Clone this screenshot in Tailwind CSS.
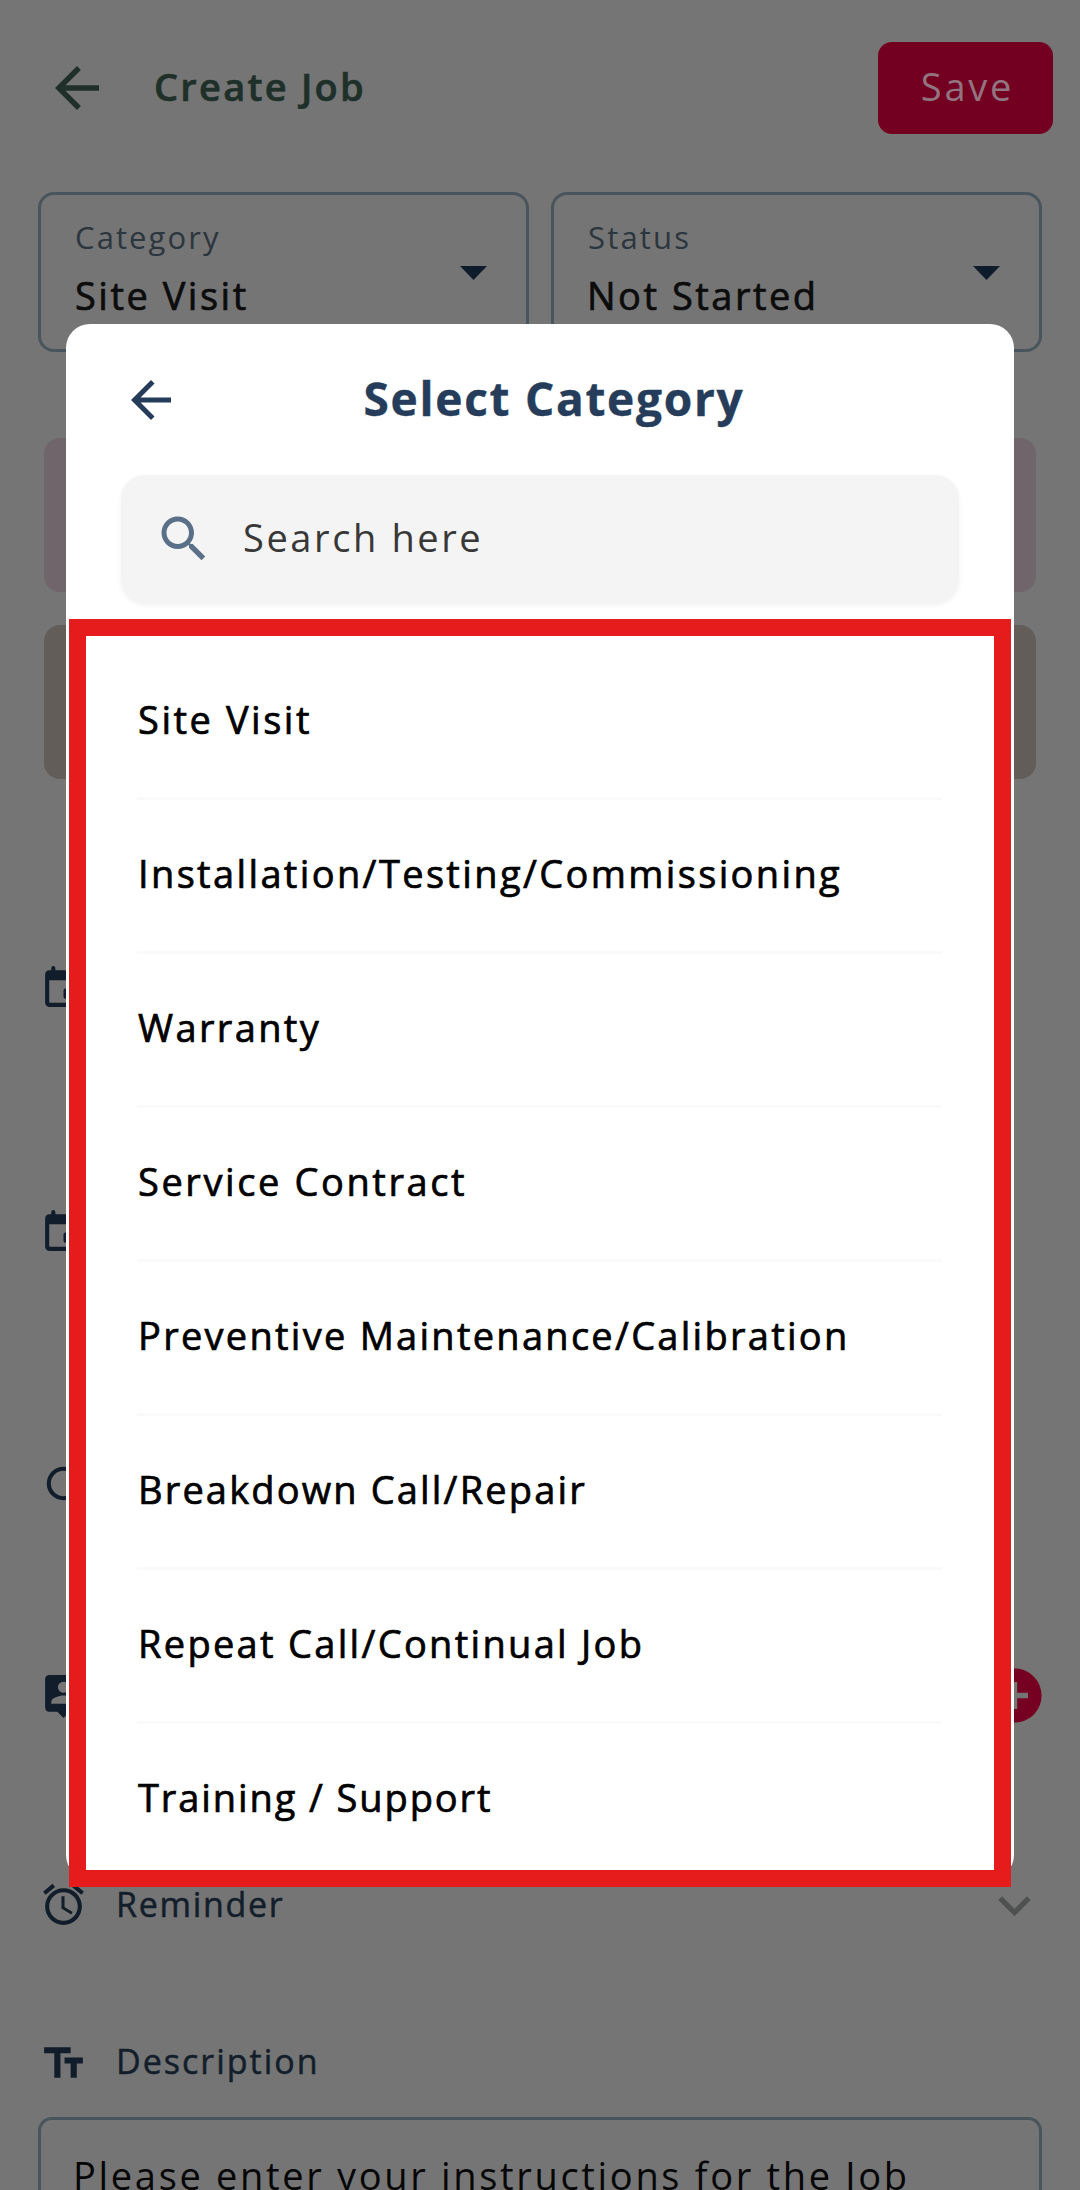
<!DOCTYPE html>
<html lang="en">
<head>
<meta charset="utf-8">
<title>Create Job</title>
<script src="https://cdn.jsdelivr.net/npm/@tailwindcss/browser@4"></script>
</head>
<body class="bg-[#757575]">
<div class="relative w-[1080px] h-[2190px] overflow-hidden bg-[#757575] font-['Open_Sans',sans-serif] text-[38px] leading-[52px] whitespace-nowrap">

  <!-- Job form behind the dialog -->
  <main class="flex flex-col">
    <header class="flex items-center h-[176px] pl-[44px] pr-[27px]">
      <svg class="size-[66px] shrink-0" viewBox="0 0 24 24" fill="#1e3029"><path d="M20 11H7.83l5.59-5.59L12 4l-8 8 8 8 1.41-1.41L7.83 13H20v-2z"/></svg>
      <h1 class="ml-[44px] pb-[5px] font-semibold tracking-[2.25px] [-webkit-text-stroke:0.6px] text-[#1e3029]">Create Job</h1>
      <button class="ml-auto flex items-center justify-center w-[175px] h-[92px] pb-[5px] pl-[4px] rounded-[14px] bg-[#730020] text-[#917480] tracking-[2.8px]">Save</button>
    </header>

    <section class="flex gap-[22px] mt-[16px] px-[38px]">
      <div class="flex items-center justify-between w-[491px] h-[160px] border-3 border-[#49555c] rounded-[16px] pl-[34px] pr-[39px]">
        <div class="flex flex-col pb-[7px]">
          <span class="text-[31px] leading-[42px] tracking-[2.1px] text-[#2c363e]">Category</span>
          <span class="mt-[11px] font-medium tracking-[2.5px] [-webkit-text-stroke:0.7px] text-[#0c0c0c]">Site Visit</span>
        </div>
        <svg class="w-[27px] h-[14px] mt-[2px]" viewBox="0 0 10 5" preserveAspectRatio="none" fill="#0f1c2b"><path d="M0 0l5 5 5-5z"/></svg>
      </div>
      <div class="flex items-center justify-between w-[491px] h-[160px] border-3 border-[#49555c] rounded-[16px] pl-[34px] pr-[39px]">
        <div class="flex flex-col pb-[7px]">
          <span class="text-[31px] leading-[42px] tracking-[2.2px] text-[#2c363e]">Status</span>
          <span class="mt-[11px] -ml-[1px] font-medium tracking-[2.5px] [-webkit-text-stroke:0.7px] text-[#0c0c0c]">Not Started</span>
        </div>
        <svg class="w-[27px] h-[14px] mt-[2px]" viewBox="0 0 10 5" preserveAspectRatio="none" fill="#0f1c2b"><path d="M0 0l5 5 5-5z"/></svg>
      </div>
    </section>

    <section class="flex flex-col gap-[33px] mt-[86px] px-[44px]">
      <div class="h-[154px] rounded-[16px] bg-[#70656a]"></div>
      <div class="h-[154px] rounded-[16px] bg-[#625d59]"></div>
    </section>

    <section class="flex flex-col pl-[39px] pr-[33px] text-[34px] font-medium text-[#131e2b]">
      <div class="flex items-center h-[244px] mt-[87px]">
        <svg class="size-[49px]" viewBox="0 0 24 24" fill="#111d2a"><path d="M17 12h-4a1 1 0 0 0-1 1v3a1 1 0 0 0 1 1h4v-5zM18 3V2a1 1 0 0 0-2 0v1H8V2a1 1 0 0 0-2 0v1H5c-1.11 0-1.99.9-1.99 2L3 19c0 1.1.89 2 2 2h14c1.1 0 2-.9 2-2V5c0-1.1-.9-2-2-2h-1zm1 15.5a.5.5 0 0 1-.5.5h-13a.5.5 0 0 1-.5-.5V8h14v10.5z"/></svg>
      </div>
      <div class="flex items-center h-[244px]">
        <svg class="size-[49px]" viewBox="0 0 24 24" fill="#111d2a"><path d="M17 12h-4a1 1 0 0 0-1 1v3a1 1 0 0 0 1 1h4v-5zM18 3V2a1 1 0 0 0-2 0v1H8V2a1 1 0 0 0-2 0v1H5c-1.11 0-1.99.9-1.99 2L3 19c0 1.1.89 2 2 2h14c1.1 0 2-.9 2-2V5c0-1.1-.9-2-2-2h-1zm1 15.5a.5.5 0 0 1-.5.5h-13a.5.5 0 0 1-.5-.5V8h14v10.5z"/></svg>
      </div>
      <div class="flex items-center h-[258px]">
        <svg class="size-[49px]" viewBox="0 0 24 24" fill="none" stroke="#111d2a" stroke-width="2"><circle cx="12" cy="12" r="7.2"/></svg>
      </div>
      <div class="flex items-center justify-between h-[166px]">
        <svg class="size-[49px]" viewBox="0 0 24 24" fill="#111d2a"><path d="M19 2H5c-1.11 0-2 .9-2 2v14c0 1.1.89 2 2 2h4l3 3 3-3h4c1.1 0 2-.9 2-2V4c0-1.1-.9-2-2-2zm-7 3.3c1.49 0 2.7 1.21 2.7 2.7 0 1.49-1.21 2.7-2.7 2.7-1.49 0-2.7-1.21-2.7-2.7 0-1.49 1.21-2.7 2.7-2.7zM18 16H6v-.9c0-2 4-3.1 6-3.1s6 1.1 6 3.1v.9z"/></svg>
        <svg class="size-[65px]" viewBox="0 0 24 24" fill="#760022"><path d="M12 2C6.48 2 2 6.48 2 12s4.48 10 10 10 10-4.48 10-10S17.52 2 12 2zm5 11h-4v4h-2v-4H7v-2h4V7h2v4h4v2z"/></svg>
      </div>
      <div class="flex items-center h-[256px]">
        <svg class="size-[49px] mb-[3px]" viewBox="0 0 24 24" fill="#111d2a"><path d="M22 5.72l-4.6-3.86-1.29 1.53 4.6 3.86L22 5.72zM7.88 3.39L6.6 1.86 2 5.71l1.29 1.53 4.59-3.85zM12.5 8H11v6l4.75 2.85.75-1.23-4-2.37V8zM12 4c-4.97 0-9 4.03-9 9s4.02 9 9 9a9 9 0 0 0 0-18zm0 16c-3.87 0-7-3.13-7-7s3.13-7 7-7 7 3.13 7 7-3.13 7-7 7z"/></svg>
        <span class="ml-[28px] pb-[5px] tracking-[1.7px] [-webkit-text-stroke:0.5px]">Reminder</span>
        <svg class="size-[65px] ml-auto mb-[2px]" viewBox="0 0 24 24" fill="#4f5150"><path d="M16.59 8.59L12 13.17 7.41 8.59 6 10l6 6 6-6z"/></svg>
      </div>
      <div class="flex items-center h-[58px]">
        <svg class="size-[49px]" viewBox="0 0 24 24" fill="#111d2a"><path d="M2.5 4v3h5v12h3V7h5V4h-13zm19 5h-9v3h3v7h3v-7h3V9z"/></svg>
        <span class="ml-[28px] pb-[4px] tracking-[2px] [-webkit-text-stroke:0.5px]">Description</span>
      </div>
    </section>

    <div class="mt-[25px] ml-[38px] w-[1004px] h-[220px] border-3 border-[#49555c] rounded-[14px] pl-[32px] pt-[29px] tracking-[2.68px] text-[#060606]">Please enter your instructions for the Job</div>
  </main>

  <!-- Category dialog -->
  <div class="absolute left-[66px] top-[324px] w-[948px] h-[1555px] rounded-[24px] bg-white flex flex-col px-[55px]">
    <div class="relative flex items-center justify-center h-[151px] text-[#253c5a]">
      <svg class="absolute left-0 top-[46px] size-[60px]" viewBox="0 0 24 24" fill="currentColor"><path d="M20 11H7.83l5.59-5.59L12 4l-8 8 8 8 1.41-1.41L7.83 13H20v-2z"/></svg>
      <h2 class="pl-[28px] pb-[4px] text-[46px] font-bold tracking-[1.72px] [-webkit-text-stroke:0.4px]">Select Category</h2>
    </div>
    <div class="flex items-center h-[128px] shrink-0 rounded-[24px] bg-[#f4f4f4] shadow-[0_2px_5px_rgba(0,0,0,0.06)] pl-[33px]">
      <svg class="size-[60px] mb-[1px]" viewBox="0 0 24 24" fill="#5a7088"><path d="M15.5 14h-.79l-.28-.27C15.41 12.59 16 11.11 16 9.5 16 5.91 13.09 3 9.5 3S3 5.91 3 9.5 5.91 16 9.5 16c1.61 0 3.09-.59 4.23-1.57l.27.28v.79l5 4.99L20.49 19l-4.99-5zm-6 0C7.01 14 5 11.99 5 9.5S7.01 5 9.5 5 14 7.01 14 9.5 11.99 14 9.5 14z"/></svg>
      <span class="ml-[29px] pb-[4px] tracking-[2.6px] text-[#383838]">Search here</span>
    </div>
    <ul class="flex flex-col mt-[43px] ml-[16px] w-[805px] font-medium [-webkit-text-stroke:0.7px] text-black *:h-[154px] *:flex *:items-center *:pb-[5px] *:border-b-3 *:border-[#fafafa]">
      <li class="tracking-[2.54px]"><span class="ml-[1px]">Site Visit</span></li>
      <li class="tracking-[2.36px]"><span class="ml-[1px]">Installation/Testing/Commissioning</span></li>
      <li class="tracking-[2.35px]"><span class="ml-[1px]">Warranty</span></li>
      <li class="tracking-[2.59px]"><span class="ml-[1px]">Service Contract</span></li>
      <li class="tracking-[2.27px]"><span class="ml-[1px]">Preventive Maintenance/Calibration</span></li>
      <li class="tracking-[2.15px]"><span class="ml-[1px]">Breakdown Call/Repair</span></li>
      <li class="tracking-[2.3px]"><span class="ml-[1px]">Repeat Call/Continual Job</span></li>
      <li class="tracking-[1.9px] border-transparent!"><span class="ml-[1px]">Training / Support</span></li>
    </ul>
  </div>

  <!-- Highlight frame around the list -->
  <div class="absolute left-[69px] top-[619px] w-[942px] h-[1268px] border-17 border-[#e61b1b]"></div>
</div>
</body>
</html>
